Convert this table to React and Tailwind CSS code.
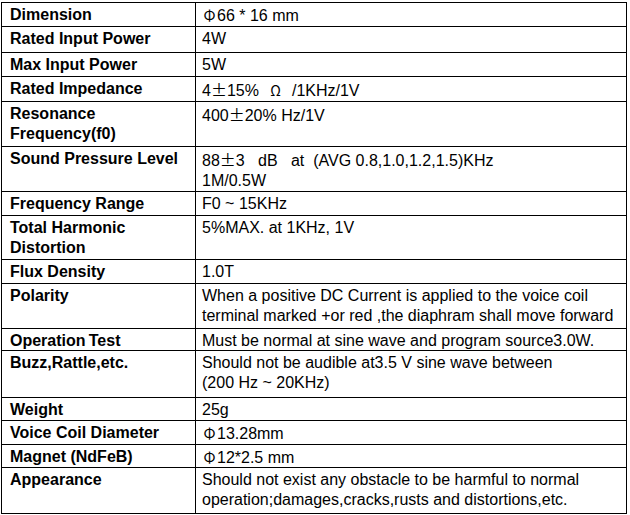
const Phi = () => (
    <span className="inline-block w-[15px] text-center font-['Noto_Sans_CJK_SC',sans-serif] text-[15px] leading-[20px]">Φ</span>
);
const PM = () => (
    <span className="inline-block w-[16px] text-center font-['Noto_Sans_CJK_SC',sans-serif] text-[16px] leading-[20px]">±</span>
);

const rows = [
    { h: "h-[24px]", label: "Dimension", value: <><Phi />66 * 16 mm</> },
    { h: "h-[26px]", label: "Rated Input Power", value: "4W" },
    { h: "h-[24px]", label: "Max Input Power", value: "5W" },
    {
        h: "h-[25px]",
        label: "Rated Impedance",
        value: <>4<PM />15%<span className="inline-block w-[33px] text-center text-[14px] leading-[20px] font-['Noto_Sans_CJK_SC',sans-serif]">Ω</span>/1KHz/1V</>
    },
    { h: "h-[45px]", label: <>Resonance<br />Frequency(f0)</>, value: <>400<PM />20% Hz/1V</> },
    {
        h: "h-[45px]",
        label: "Sound Pressure Level",
        value: <>88<PM />3{"   "}dB{"   "}at{"  "}(AVG 0.8,1.0,1.2,1.5)KHz<br />1M/0.5W</>
    },
    { h: "h-[24px]", label: "Frequency Range", value: "F0 ~ 15KHz" },
    { h: "h-[44px]", label: <>Total Harmonic<br />Distortion</>, value: "5%MAX. at 1KHz, 1V" },
    { h: "h-[24px]", label: "Flux Density", value: "1.0T" },
    {
        h: "h-[45px]",
        label: "Polarity",
        value: <>When a positive DC Current is applied to the voice coil<br />terminal marked +or red ,the diaphram shall move forward</>
    },
    { h: "h-[22px]", label: "Operation\u2009Test", value: "Must be normal at sine wave and program source3.0W." },
    {
        h: "h-[47px]",
        label: "Buzz,Rattle,etc.",
        value: <>Should not be audible at3.5 V sine wave between<br />(200 Hz ~ 20KHz)</>
    },
    { h: "h-[23px]", label: "Weight", value: "25g" },
    { h: "h-[24px]", label: "Voice Coil Diameter", value: <><Phi />13.28mm</> },
    { h: "h-[23px]", label: "Magnet (NdFeB)", value: <><Phi />12*2.5 mm</> },
    {
        h: "h-[46px]",
        label: "Appearance",
        value: <>Should not exist any obstacle to be harmful to normal<br />operation;damages,cracks,rusts and distortions,etc.</>
    }
];

const App = () => {
    return (
        <div className="w-[630px] h-[515px] bg-white pt-[2px] pl-[1px] font-['Liberation_Sans',Arial,'Noto_Sans_CJK_SC',sans-serif] text-[16px] leading-[20px] text-black">
            <div className="w-[626px] border-t border-l border-r border-black">
                {rows.map((row, i) => (
                    <div key={i} className={`flex border-b border-black ${row.h}`}>
                        {/* LABEL */}
                        <div className="w-[194px] shrink-0 border-r border-black pl-[8px] pt-[2px] font-bold whitespace-nowrap">
                            {row.label}
                        </div>

                        {/* VALUE */}
                        <div className="flex-1 pl-[6px] pt-[2px] whitespace-pre">
                            {row.value}
                        </div>
                    </div>
                ))}
            </div>
        </div>
    );
};

export default App;
